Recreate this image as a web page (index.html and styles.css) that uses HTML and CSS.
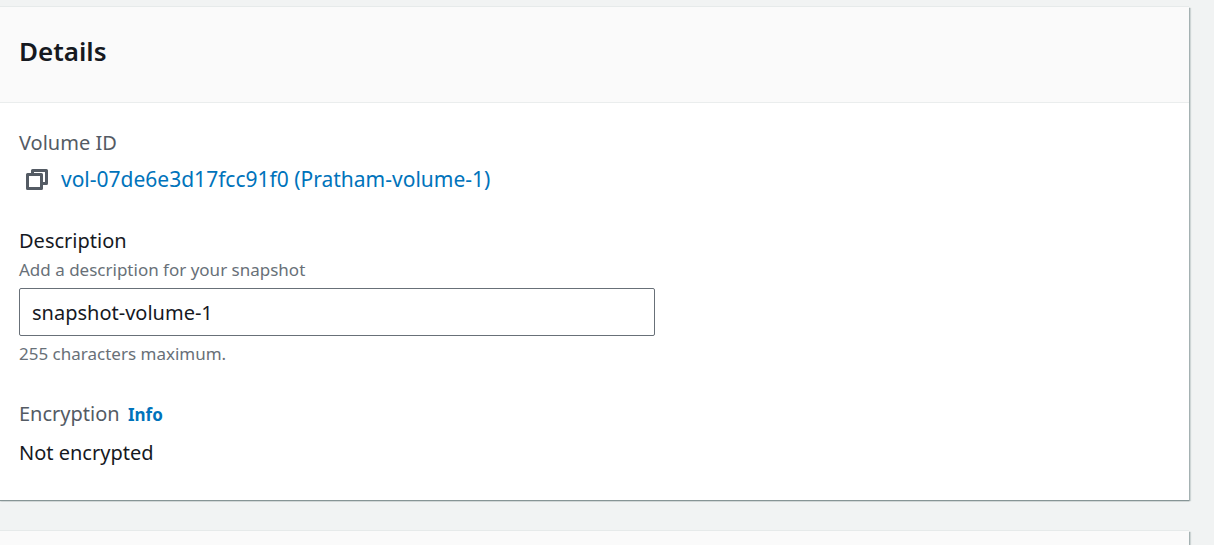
FILE: index.html
```html
<!DOCTYPE html>
<html lang="en">
<head>
<meta charset="utf-8">
<title>Create snapshot</title>
<link rel="stylesheet" href="styles.css">
</head>
<body>
<main class="page">
  <section class="card">
    <header class="card-header"><h2 class="card-title">Details</h2></header>
    <div class="card-body">
      <div class="field">
        <div class="key">Volume ID</div>
        <div class="volume">
          <button class="copy" type="button" aria-label="Copy volume ID">
            <svg class="icon" viewBox="0 0 22 22" fill="none" stroke="currentColor" stroke-width="3" stroke-linejoin="round" aria-hidden="true">
              <path d="M6.500 6V2.500H20.500V15.500H17"/>
              <path d="M1.500 6.500H15.500V20.500H1.500Z"/>
            </svg>
          </button>
          <a class="link" href="#">vol-07de6e3d17fcc91f0 (Pratham-volume-1)</a>
        </div>
      </div>
      <div class="field">
        <label class="label" for="description">Description</label>
        <div class="hint" id="description-hint">Add a description for your snapshot</div>
        <input class="input" id="description" type="text" value="snapshot-volume-1" aria-describedby="description-hint description-limit">
        <div class="hint" id="description-limit">255 characters maximum.</div>
      </div>
      <div class="field field-encryption">
        <div class="key">Encryption <a class="info" href="#">Info</a></div>
        <div class="value">Not encrypted</div>
      </div>
    </div>
  </section>
  <section class="card">
    <header class="card-header"></header>
  </section>
</main>
</body>
</html>
```
FILE: styles.css
```css
* {
  box-sizing: border-box;
}

body {
  margin: 0;
  background: #f1f3f3;
  color: #16191f;
  font: 20px/30px "Noto Sans", sans-serif;
}

.page {
  display: flex;
  flex-direction: column;
  gap: 31px;
  height: 100vh;
  overflow: hidden;
  padding: 7px 25px 0 0;
}

.card {
  flex: none;
  background: #fff;
  box-shadow: 0 -1px 0 #e6eaea, 0 1px 1px #879596, 1px 1px 1px #aab7b8, 2px 1px 1px #d5dbdb;
}

.card-header {
  min-height: 96px;
  padding: 29px 19px;
  background: #fafafa;
  border-bottom: 1px solid #eaeded;
}

.card-title {
  margin: 0;
  font-size: 26px;
  line-height: 30px;
  font-weight: 600;
}

.card-body {
  display: flex;
  flex-direction: column;
  gap: 32px;
  padding: 25px 19px 32px;
}

.field {
  display: flex;
  flex-direction: column;
}

.key {
  color: #545b64;
}

.volume {
  display: flex;
  align-items: center;
  gap: 13px;
  margin-top: 6px;
  padding-left: 7px;
}

.copy {
  display: flex;
  padding: 0;
  border: 0;
  background: none;
  color: #545b64;
}

.icon {
  width: 22px;
  height: 22px;
}

.link,
.info {
  color: #0073bb;
  text-decoration: none;
}

.link {
  font-size: 21px;
}

.info {
  margin-left: 3px;
  font-size: 17px;
  font-weight: 700;
}

.hint {
  color: #687078;
  font-size: 17px;
  line-height: 27px;
}

.input {
  width: 100%;
  max-width: 636px;
  height: 48px;
  margin: 5px 0 4px;
  padding: 0 12px;
  border: 1px solid #687078;
  border-radius: 2px;
  background: #fff;
  color: inherit;
  font: inherit;
}

.field-encryption {
  gap: 8px;
}
```
